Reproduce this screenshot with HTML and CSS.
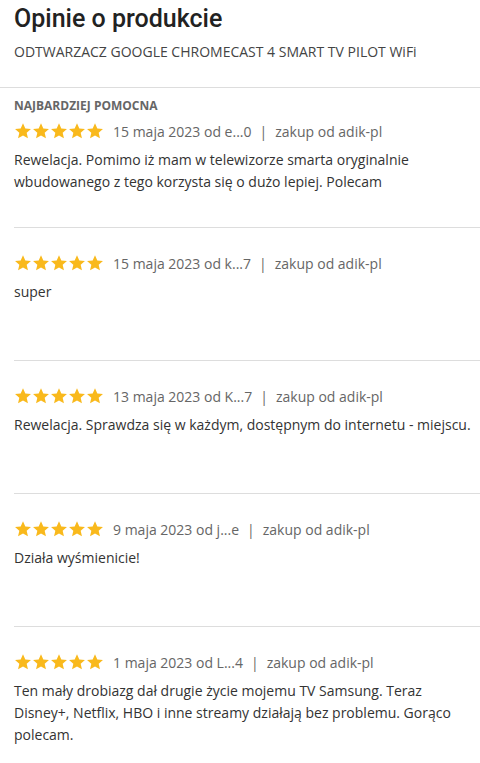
FILE: index.html
```html
<!DOCTYPE html>
<html lang="pl">
<head>
    <meta charset="UTF-8">
    <meta name="viewport" content="width=device-width, initial-scale=1.0">
    <title>Opinie o produkcie</title>
    <link rel="stylesheet" href="styles.css">
</head>
<body>
    <svg width="0" height="0" style="position: absolute;">
        <defs>
            <symbol id="star" viewBox="0 0 24 24">
                <path d="M12 1.8l3.1 6.9 7.5.7-5.7 5 1.7 7.4L12 17.9l-6.6 3.9 1.7-7.4-5.7-5 7.5-.7z"/>
            </symbol>
        </defs>
    </svg>

    <div class="header">
        <h1>Opinie o produkcie</h1>
        <div class="product">ODTWARZACZ GOOGLE CHROMECAST 4 SMART TV PILOT WiFi</div>
    </div>

    <div class="reviews">
        <div class="review review-top">
            <div class="label">NAJBARDZIEJ POMOCNA</div>
            <div class="meta">
                <span class="stars">
                    <svg><use href="#star"/></svg><svg><use href="#star"/></svg><svg><use href="#star"/></svg><svg><use href="#star"/></svg><svg><use href="#star"/></svg>
                </span>
                <span>15 maja 2023 od e...0</span>
                <span class="sep">|</span>
                <span>zakup od adik-pl</span>
            </div>
            <p class="text">Rewelacja. Pomimo iż mam w telewizorze smarta oryginalnie wbudowanego z tego korzysta się o dużo lepiej. Polecam</p>
        </div>

        <div class="review">
            <div class="meta">
                <span class="stars">
                    <svg><use href="#star"/></svg><svg><use href="#star"/></svg><svg><use href="#star"/></svg><svg><use href="#star"/></svg><svg><use href="#star"/></svg>
                </span>
                <span>15 maja 2023 od k...7</span>
                <span class="sep">|</span>
                <span>zakup od adik-pl</span>
            </div>
            <p class="text">super</p>
        </div>

        <div class="review">
            <div class="meta">
                <span class="stars">
                    <svg><use href="#star"/></svg><svg><use href="#star"/></svg><svg><use href="#star"/></svg><svg><use href="#star"/></svg><svg><use href="#star"/></svg>
                </span>
                <span>13 maja 2023 od K...7</span>
                <span class="sep">|</span>
                <span>zakup od adik-pl</span>
            </div>
            <p class="text">Rewelacja. Sprawdza się w każdym, dostępnym do internetu - miejscu.</p>
        </div>

        <div class="review">
            <div class="meta">
                <span class="stars">
                    <svg><use href="#star"/></svg><svg><use href="#star"/></svg><svg><use href="#star"/></svg><svg><use href="#star"/></svg><svg><use href="#star"/></svg>
                </span>
                <span>9 maja 2023 od j...e</span>
                <span class="sep">|</span>
                <span>zakup od adik-pl</span>
            </div>
            <p class="text">Działa wyśmienicie!</p>
        </div>

        <div class="review">
            <div class="meta">
                <span class="stars">
                    <svg><use href="#star"/></svg><svg><use href="#star"/></svg><svg><use href="#star"/></svg><svg><use href="#star"/></svg><svg><use href="#star"/></svg>
                </span>
                <span>1 maja 2023 od L...4</span>
                <span class="sep">|</span>
                <span>zakup od adik-pl</span>
            </div>
            <p class="text">Ten mały drobiazg dał drugie życie mojemu TV Samsung. Teraz Disney+, Netflix, HBO i inne streamy działają bez problemu. Gorąco polecam.</p>
        </div>
    </div>
</body>
</html>
```

FILE: styles.css
```css
body {
    margin: 0;
    background: #fff;
    font-family: "Open Sans", Arial, sans-serif;
    color: #333;
}
.header {
    padding: 5px 14px 25px;
    border-bottom: 1px solid #ddd;
}
.header h1 {
    margin: 0;
    font-family: Roboto, Arial, sans-serif;
    font-weight: 500;
    font-size: 25px;
    line-height: 28px;
    color: #222;
}
.product {
    margin-top: 9px;
    font-size: 14px;
    line-height: 20px;
    color: #444;
}
.reviews {
    padding-left: 14px;
}
.review {
    box-sizing: border-box;
    min-height: 133px;
    padding-top: 25px;
    border-top: 1px solid #ddd;
}
.review-top {
    border-top: none;
    padding-top: 10px;
    min-height: 139px;
}
.label {
    font-size: 12px;
    line-height: 16px;
    font-weight: 700;
    color: #666;
    margin-bottom: 7px;
}
.meta {
    display: flex;
    align-items: center;
    height: 20px;
    font-size: 14px;
    color: #666;
}
.stars {
    display: flex;
    margin-right: 9px;
}
.stars svg {
    width: 18px;
    height: 18px;
    fill: #f9b91c;
}
.sep {
    margin: 0 8px;
}
.text {
    margin: 8px 0 0;
    font-size: 14px;
    line-height: 22px;
    color: #333;
}
```
